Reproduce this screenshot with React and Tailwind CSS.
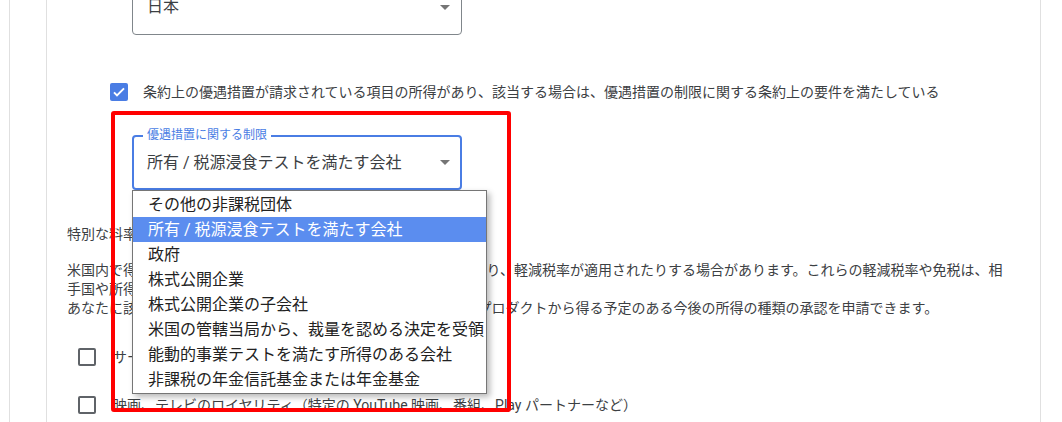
const options = [
  "その他の非課税団体",
  "所有 / 税源浸食テストを満たす会社",
  "政府",
  "株式公開企業",
  "株式公開企業の子会社",
  "米国の管轄当局から、裁量を認める決定を受領",
  "能動的事業テストを満たす所得のある会社",
  "非課税の年金信託基金または年金基金",
];

function Caret() {
  return (
    <span className="h-0 w-0 border-x-[5px] border-t-[5px] border-x-transparent border-t-[#757575]" />
  );
}

function Box({ checked }) {
  if (checked) {
    return (
      <span className="flex h-[18px] w-[18px] shrink-0 items-center justify-center rounded-[2px] bg-[#4a7de4]">
        <svg viewBox="0 0 24 24" className="h-[16px] w-[16px]" fill="none" stroke="white" strokeWidth="3">
          <path d="M4.5 12.5l4.5 4.5L19.5 6.5" />
        </svg>
      </span>
    );
  }
  return <span className="h-[18px] w-[18px] shrink-0 rounded-[2px] border-2 border-[#5f6368]" />;
}

export default function App() {
  return (
    <div className="relative h-[422px] w-[1062px] overflow-hidden bg-white font-['Roboto','Noto_Sans_CJK_JP',sans-serif] text-[#3c4043]">
      <div className="ml-[9px] h-full border-l border-[#e0e0e0]">
        <div className="ml-[36px] flow-root h-full w-[995px] border-x border-[#e0e0e0]">
          <div className="-mt-[21px]">
            {/* country */}
            <div className="ml-[85px] flex h-[56px] w-[330px] items-center justify-between rounded-[4px] border border-[#80868b] pl-[14px] pr-[11px]">
              <span className="text-[16px] leading-[24px]">日本</span>
              <Caret />
            </div>

            <label className="ml-[63px] mt-[47px] flex items-center gap-[15px]">
              <Box checked />
              <span className="whitespace-nowrap text-[14px] leading-[20px]">
                条約上の優遇措置が請求されている項目の所得があり、該当する場合は、優遇措置の制限に関する条約上の要件を満たしている
              </span>
            </label>

            {/* limitation on benefits select */}
            <div className="relative ml-[85px] mt-[33px] flex h-[55px] w-[330px] items-center justify-between rounded-[4px] border-2 border-[#4a7de4] pl-[13px] pr-[10px]">
              <span className="absolute left-[9px] top-[-10px] bg-white px-[4px] text-[12px] leading-[16px] text-[#4a7de4]">
                優遇措置に関する制限
              </span>
              <span className="whitespace-nowrap text-[16px] leading-[24px]">所有 / 税源浸食テストを満たす会社</span>
              <Caret />

              <ul className="absolute left-[-2px] top-[53px] z-10 w-[355px] border border-[#767676] bg-white py-[1px] shadow-[3px_3px_6px_rgba(0,0,0,0.28)]">
                {options.map((o, i) => (
                  <li
                    key={o}
                    className={
                      i === 1
                        ? "h-[25px] whitespace-nowrap bg-[#5b8def] pl-[15px] text-[16px] leading-[25px] text-white"
                        : "h-[25px] whitespace-nowrap pl-[15px] text-[16px] leading-[25px] text-[#222]"
                    }
                  >
                    {o}
                  </li>
                ))}
              </ul>
            </div>

            <p className="ml-[20px] mt-[34px] text-[14px] leading-[20px]">特別な料率と条件について</p>

            <p className="ml-[20px] mt-[17px] whitespace-nowrap text-[14px] leading-[19px]">
              米国内で得た所得は、租税条約に基づいて源泉徴収税が免除されたり、軽減税率が適用されたりする場合があります。これらの軽減税率や免税は、相
              <br />
              手国や所得の種類によって異なります。
              <br />
              あなたに該当する場合は、租税条約上の特典を請求して、Google プロダクトから得る予定のある今後の所得の種類の承認を申請できます。
            </p>

            <label className="ml-[31px] mt-[29px] flex items-center gap-[17px]">
              <Box />
              <span className="text-[14px] leading-[20px]">サービス</span>
            </label>
            <label className="ml-[31px] mt-[28px] flex items-center gap-[17px]">
              <Box />
              <span className="whitespace-nowrap text-[14px] leading-[20px]">
                映画、テレビのロイヤリティ（特定の YouTube 映画、番組、Play パートナーなど）
              </span>
            </label>
          </div>
        </div>
      </div>

      {/* annotation */}
      <div className="pointer-events-none absolute left-[111px] top-[111px] z-20 h-[301px] w-[400px] rounded-[3px] border-4 border-[#ff0000]" />
    </div>
  );
}
